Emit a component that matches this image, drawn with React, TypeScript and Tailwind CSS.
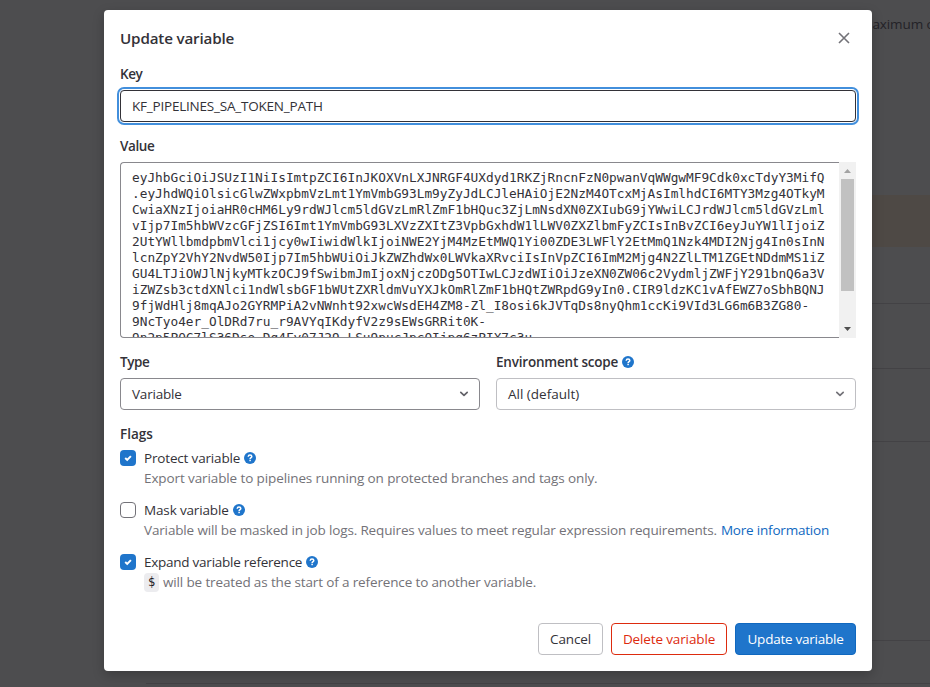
import React from "react";

const token = [
  "eyJhbGciOiJSUzI1NiIsImtpZCI6InJKOXVnLXJNRGF4UXdyd1RKZjRncnFzN0pwanVqWWgwMF9Cdk0xcTdyY3MifQ",
  ".eyJhdWQiOlsicGlwZWxpbmVzLmt1YmVmbG93Lm9yZyJdLCJleHAiOjE2NzM4OTcxMjAsImlhdCI6MTY3Mzg4OTkyM",
  "CwiaXNzIjoiaHR0cHM6Ly9rdWJlcm5ldGVzLmRlZmF1bHQuc3ZjLmNsdXN0ZXIubG9jYWwiLCJrdWJlcm5ldGVzLml",
  "vIjp7Im5hbWVzcGFjZSI6Imt1YmVmbG93LXVzZXItZ3VpbGxhdW1lLWV0ZXZlbmFyZCIsInBvZCI6eyJuYW1lIjoiZ",
  "2UtYWllbmdpbmVlci1jcy0wIiwidWlkIjoiNWE2YjM4MzEtMWQ1Yi00ZDE3LWFlY2EtMmQ1Nzk4MDI2Njg4In0sInN",
  "lcnZpY2VhY2NvdW50Ijp7Im5hbWUiOiJkZWZhdWx0LWVkaXRvciIsInVpZCI6ImM2Mjg4N2ZlLTM1ZGEtNDdmMS1iZ",
  "GU4LTJiOWJlNjkyMTkzOCJ9fSwibmJmIjoxNjczODg5OTIwLCJzdWIiOiJzeXN0ZW06c2VydmljZWFjY291bnQ6a3V",
  "iZWZsb3ctdXNlci1ndWlsbGF1bWUtZXRldmVuYXJkOmRlZmF1bHQtZWRpdG9yIn0.CIR9ldzKC1vAfEWZ7oSbhBQNJ",
  "9fjWdHlj8mqAJo2GYRMPiA2vNWnht92xwcWsdEH4ZM8-Zl_I8osi6kJVTqDs8nyQhm1ccKi9VId3LG6m6B3ZG80-",
  "9NcTyo4er_OlDRd7ru_r9AVYqIKdyfV2z9sEWsGRRit0K-",
  "9n2p5PQC7lS36Dso_Dq4Fy07J29_LSu9pucJpcOIjpq6zPIX7c3u",
];

function Help() {
  return (
    <svg className="ml-1 size-3 shrink-0" viewBox="0 0 12 12">
      <circle cx="6" cy="6" r="6" fill="#1f75cb" />
      <path d="M4.2 4.7C4.3 3.6 5 3.1 6 3.1c1.1 0 1.8.6 1.8 1.4C7.8 5.6 6.1 5.7 6.1 7" fill="none" stroke="#fff" strokeWidth="1.5" />
      <rect x="5.35" y="7.7" width="1.5" height="1.5" fill="#fff" />
    </svg>
  );
}

function Check({ on }: { on?: boolean }) {
  if (!on) return <span className="size-4 shrink-0 rounded-[4px] border border-[#737278] bg-white" />;
  return (
    <span className="flex size-4 shrink-0 items-center justify-center rounded-[4px] bg-[#1f75cb]">
      <svg className="size-2" viewBox="0 0 8 8" fill="none" stroke="#fff" strokeWidth="2">
        <path d="M1.2 4.1 3.2 5.9 6.9 2.1" />
      </svg>
    </span>
  );
}

function Chevron({ color }: { color: string }) {
  return (
    <svg className="-mr-px h-[6px] w-[10px]" viewBox="0 0 10 6" fill="none" stroke={color} strokeWidth="1.7" strokeLinecap="round" strokeLinejoin="round">
      <path d="M1.8 1.4 5 4.4 8.2 1.4" />
    </svg>
  );
}

function Flag({ label, spacing, on, children }: { label: string; spacing: string; on?: boolean; children: React.ReactNode }) {
  return (
    <div className="flex h-10 gap-2">
      <Check on={on} />
      <div className="flex flex-col">
        <div className="flex h-4 items-center">
          <span className={spacing}>{label}</span>
          <Help />
        </div>
        <div className="flex h-6 items-center whitespace-nowrap text-[#737278]">{children}</div>
      </div>
    </div>
  );
}

export default function App() {
  return (
    <div className="relative h-[687px] w-[930px] overflow-hidden bg-[#4d4d4f] font-['Open_Sans','Noto_Sans',sans-serif] text-[13.5px] leading-4 text-[#333238]">
      <div className="ml-[146px] flex h-full flex-col">
        <div className="flex h-[195px] justify-end pt-4">
          <p className="w-[70px] whitespace-nowrap tracking-[-0.1px] text-[#232227]">maximum o</p>
        </div>
        <div className="h-[52px] bg-[#4e4945]" />
        <div className="h-14" />
        <div className="h-[65px] border-t border-[#434245]" />
        <div className="h-[73px] border-t border-[#434245]" />
        <div className="h-[199px] border-t border-[#434245]" />
        <div className="h-[43px] border-t border-[#434245]" />
        <div className="h-1 border-t border-[#434245]" />
      </div>

      <div className="absolute left-[104px] top-[10px] flex h-[661px] w-[768px] flex-col rounded-[4px] bg-white px-4 shadow-[0_4px_12px_rgba(0,0,0,0.22)]">
        <header className="flex h-14 items-center justify-between">
          <h1 className="text-[15.2px] font-semibold leading-6 tracking-[-0.17px]">Update variable</h1>
          <svg className="mr-[6px] size-3" viewBox="0 0 12 12" fill="none" stroke="#737278" strokeWidth="1.6">
            <path d="M1 1 11 11M11 1 1 11" />
          </svg>
        </header>

        <label className="flex h-6 items-start font-semibold tracking-[-0.4px]">Key</label>
        <div className="flex h-8 shrink-0 items-center rounded-[4px] border border-[#333238] px-[11px] shadow-[0_0_0_1px_#fff,0_0_0_3px_#428fdc]">
          <span className="tracking-[-0.21px]">KF_PIPELINES_SA_TOKEN_PATH</span>
        </div>

        <label className="mt-4 flex h-6 items-start font-semibold tracking-[-0.4px]">Value</label>
        <div className="flex h-44 shrink-0">
          <div className="flex-1 overflow-hidden rounded-l-[4px] border border-r-0 border-[#89888d] pl-[11px] pt-[7px]">
            <pre className="font-['DejaVu_Sans_Mono',monospace] text-[12.79px] leading-4">{token.join("\n")}</pre>
          </div>
          <div className="flex w-[17px] flex-col items-center bg-[#f1f1f1]">
            <svg className="h-[17px] w-[17px]" viewBox="0 0 17 17"><path d="M5 11h7L8.5 7z" fill="#a3a3a3" /></svg>
            <div className="h-28 w-[13px] bg-[#c1c1c1]" />
            <svg className="mt-auto h-[17px] w-[17px]" viewBox="0 0 17 17"><path d="M5 6h7L8.5 10z" fill="#505050" /></svg>
          </div>
        </div>

        <div className="mt-4 grid grid-cols-2 gap-4">
          <div>
            <label className="flex h-6 items-start font-semibold tracking-[-0.4px]">Type</label>
            <div className="flex h-8 items-center justify-between rounded-[4px] border border-[#89888d] px-[11px]">
              <span className="tracking-[-0.2px]">Variable</span>
              <Chevron color="#626168" />
            </div>
          </div>
          <div>
            <label className="flex h-6 items-start font-semibold">
              <span className="tracking-[-0.2px]">Environment scope</span>
              <span className="mt-0.5"><Help /></span>
            </label>
            <div className="flex h-8 items-center justify-between rounded-[4px] border border-[#bfbfc3] px-[11px]">
              <span>All (default)</span>
              <Chevron color="#737278" />
            </div>
          </div>
        </div>

        <h2 className="mt-4 h-6 font-semibold">Flags</h2>
        <div className="flex flex-col gap-3">
          <Flag label="Protect variable" spacing="tracking-[-0.17px]" on>
            <span className="tracking-[-0.11px]">Export variable to pipelines running on protected branches and tags only.</span>
          </Flag>
          <Flag label="Mask variable" spacing="tracking-[-0.15px]">
            <span className="tracking-[-0.15px]">Variable will be masked in job logs. Requires values to meet regular expression requirements.</span>
            <a className="ml-1 tracking-[-0.2px] text-[#1068bf]">More information</a>
          </Flag>
          <Flag label="Expand variable reference" spacing="tracking-[-0.25px]" on>
            <code className="mr-1 flex h-[19px] w-[15px] items-center justify-center rounded-[4px] bg-[#ececef] font-['DejaVu_Sans_Mono',monospace] text-[12px] text-[#18171d]">$</code>
            <span className="tracking-[-0.14px]">will be treated as the start of a reference to another variable.</span>
          </Flag>
        </div>

        <footer className="mb-4 mt-auto flex justify-end gap-2">
          <button className="h-8 w-[65px] whitespace-nowrap rounded-[4px] border border-[#bfbfc3] tracking-[-0.15px]">Cancel</button>
          <button className="h-8 w-[116px] whitespace-nowrap rounded-[4px] border border-[#dd2b0e] tracking-[-0.13px] text-[#dd2b0e]">Delete variable</button>
          <button className="h-8 w-[121px] whitespace-nowrap rounded-[4px] border border-[#1068bf] bg-[#1f75cb] font-medium tracking-[-0.25px] text-white">Update variable</button>
        </footer>
      </div>
    </div>
  );
}
